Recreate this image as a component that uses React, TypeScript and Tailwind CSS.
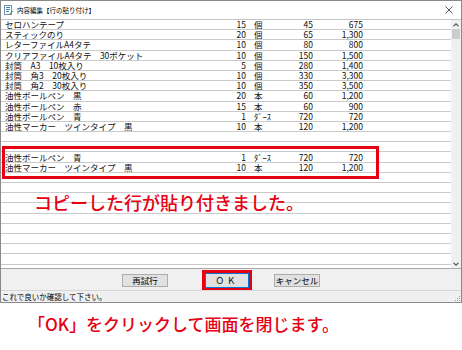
import React from "react";

type Row = { name: string; qty: string; unit: string; price: string; amount: string };

const E: Row = { name: "", qty: "", unit: "", price: "", amount: "" };

const rows: Row[] = [
  { name: "セロハンテープ", qty: "15", unit: "個", price: "45", amount: "675" },
  { name: "スティックのり", qty: "20", unit: "個", price: "65", amount: "1,300" },
  { name: "レターファイルA4タテ", qty: "10", unit: "個", price: "80", amount: "800" },
  { name: "クリアファイルA4タテ　30ポケット", qty: "10", unit: "個", price: "150", amount: "1,500" },
  { name: "封筒　A3　10枚入り", qty: "5", unit: "個", price: "280", amount: "1,400" },
  { name: "封筒　角3　20枚入り", qty: "10", unit: "個", price: "330", amount: "3,300" },
  { name: "封筒　角2　30枚入り", qty: "10", unit: "個", price: "350", amount: "3,500" },
  { name: "油性ボールペン　黒", qty: "20", unit: "本", price: "60", amount: "1,200" },
  { name: "油性ボールペン　赤", qty: "15", unit: "本", price: "60", amount: "900" },
  { name: "油性ボールペン　青", qty: "1", unit: "ﾀﾞｰｽ", price: "720", amount: "720" },
  { name: "油性マーカー　ツインタイプ　黒", qty: "10", unit: "本", price: "120", amount: "1,200" },
  E,
  E,
  { name: "油性ボールペン　青", qty: "1", unit: "ﾀﾞｰｽ", price: "720", amount: "720" },
  { name: "油性マーカー　ツインタイプ　黒", qty: "10", unit: "本", price: "120", amount: "1,200" },
  E, E, E, E, E, E, E, E, E,
];

function ListRow({ r }: { r: Row }) {
  return (
    <div className="flex h-[10.2px] shrink-0 items-center border-b border-[#cacaca] text-[8.5px] leading-[9px] text-[#111] whitespace-nowrap">
      <span className="w-[219px] pl-[4px]">{r.name}</span>
      <span className="w-[26px] text-right">{r.qty}</span>
      <span className="ml-[8px] w-[30px]">{r.unit}</span>
      <span className="w-[29px] text-right">{r.price}</span>
      <span className="w-[50px] text-right">{r.amount}</span>
    </div>
  );
}

function TitleIcon() {
  return (
    <svg width="9" height="10" viewBox="0 0 9 10">
      <rect x="0.5" y="0.5" width="7" height="9" fill="#fff" stroke="#7a8fa6" />
      <rect x="2" y="2" width="4" height="1" fill="#3a86c8" />
      <rect x="2" y="4" width="4" height="1" fill="#3a86c8" />
      <rect x="2" y="6" width="3" height="1" fill="#3a86c8" />
      <path d="M5 9.5 L8.5 5.5 L9 6.5 L6 9.8 Z" fill="#3fa34d" />
    </svg>
  );
}

function Chevron({ down }: { down?: boolean }) {
  return (
    <svg width="6" height="4" viewBox="0 0 6 4">
      <path d={down ? "M0.5 0.8 L3 3.2 L5.5 0.8" : "M0.5 3.2 L3 0.8 L5.5 3.2"} fill="none" stroke="#606060" strokeWidth="1.2" />
    </svg>
  );
}

export default function App() {
  return (
    <div className="w-[462px] h-[350px] bg-white font-['Noto_Sans_CJK_JP',sans-serif]">
      {/* dialog window */}
      <div className="relative w-[462px] h-[303px] border border-[#8a8a8a] bg-white flex flex-col">
        {/* title bar */}
        <div className="h-[18px] flex items-center pl-[3px] pr-[4px]">
          <TitleIcon />
          <span className="ml-[4px] text-[6.5px] leading-[8px] text-black">内容編集【行の貼り付け】</span>
          <span className="ml-auto mr-[4px]">
            <svg width="8" height="8" viewBox="0 0 8 8">
              <path d="M0.5 0.5 L7.5 7.5 M7.5 0.5 L0.5 7.5" stroke="#444" strokeWidth="0.9" />
            </svg>
          </span>
        </div>

        {/* list */}
        <div className="h-[250px] flex border-t border-b border-t-[#c4c4c4] border-b-[#a8a8a8]">
          <div className="flex-1 flex flex-col">
            {rows.map((r, i) => (
              <ListRow key={i} r={r} />
            ))}
          </div>
          <div className="w-[10px] bg-[#f0f0f0] flex flex-col items-center">
            <div className="h-[9px] flex items-center justify-center">
              <Chevron />
            </div>
            <div className="w-[8px] h-[10px] bg-[#cdcdcd]" />
            <div className="flex-1" />
            <div className="h-[9px] flex items-center justify-center">
              <Chevron down />
            </div>
          </div>
        </div>

        {/* buttons */}
        <div className="h-[21px] bg-[#f0f0f0] flex items-start pl-[121px] text-[8.5px] leading-[9px] text-black">
          <div className="mt-[5px] w-[46px] h-[13px] bg-[#e1e1e1] border border-[#adadad] flex items-center justify-center">
            再試行
          </div>
          <div className="mt-[1px] ml-[34px] w-[50px] h-[21px] border-[3px] border-[#e60012]">
            <div className="w-full h-full bg-[#e1e1e1] border border-[#0078d7] flex items-center justify-center tracking-[3px]">
              ＯＫ
            </div>
          </div>
          <div className="mt-[5px] ml-[22px] w-[46px] h-[13px] bg-[#e1e1e1] border border-[#adadad] flex items-center justify-center">
            キャンセル
          </div>
        </div>

        {/* status bar */}
        <div className="h-[12px] bg-[#f0f0f0] border-t border-[#d6d6d6] flex items-center pl-[1px] pr-[1px]">
          <span className="text-[7.5px] leading-[9px] text-black">これで良いか確認して下さい。</span>
          <svg className="ml-auto self-end mb-[1px]" width="5" height="5" viewBox="0 0 5 5">
            <rect x="4" y="0" width="1" height="1" fill="#a0a0a0" />
            <rect x="2" y="2" width="1" height="1" fill="#a0a0a0" />
            <rect x="4" y="2" width="1" height="1" fill="#a0a0a0" />
            <rect x="0" y="4" width="1" height="1" fill="#a0a0a0" />
            <rect x="2" y="4" width="1" height="1" fill="#a0a0a0" />
            <rect x="4" y="4" width="1" height="1" fill="#a0a0a0" />
          </svg>
        </div>

        {/* annotation: pasted rows */}
        <div className="absolute left-[1px] top-[145px] w-[377px] h-[33px] border-[3px] border-[#e60012]" />
        <div className="absolute left-[33px] top-[192px] text-[18px] leading-none font-medium text-[#e60012] whitespace-nowrap">
          コピーした行が貼り付きました。
        </div>
      </div>

      {/* annotation below */}
      <div className="mt-[12px] pl-[28px] text-[17px] leading-none font-medium text-[#e60012] whitespace-nowrap">
        「OK」をクリックして画面を閉じます。
      </div>
    </div>
  );
}
